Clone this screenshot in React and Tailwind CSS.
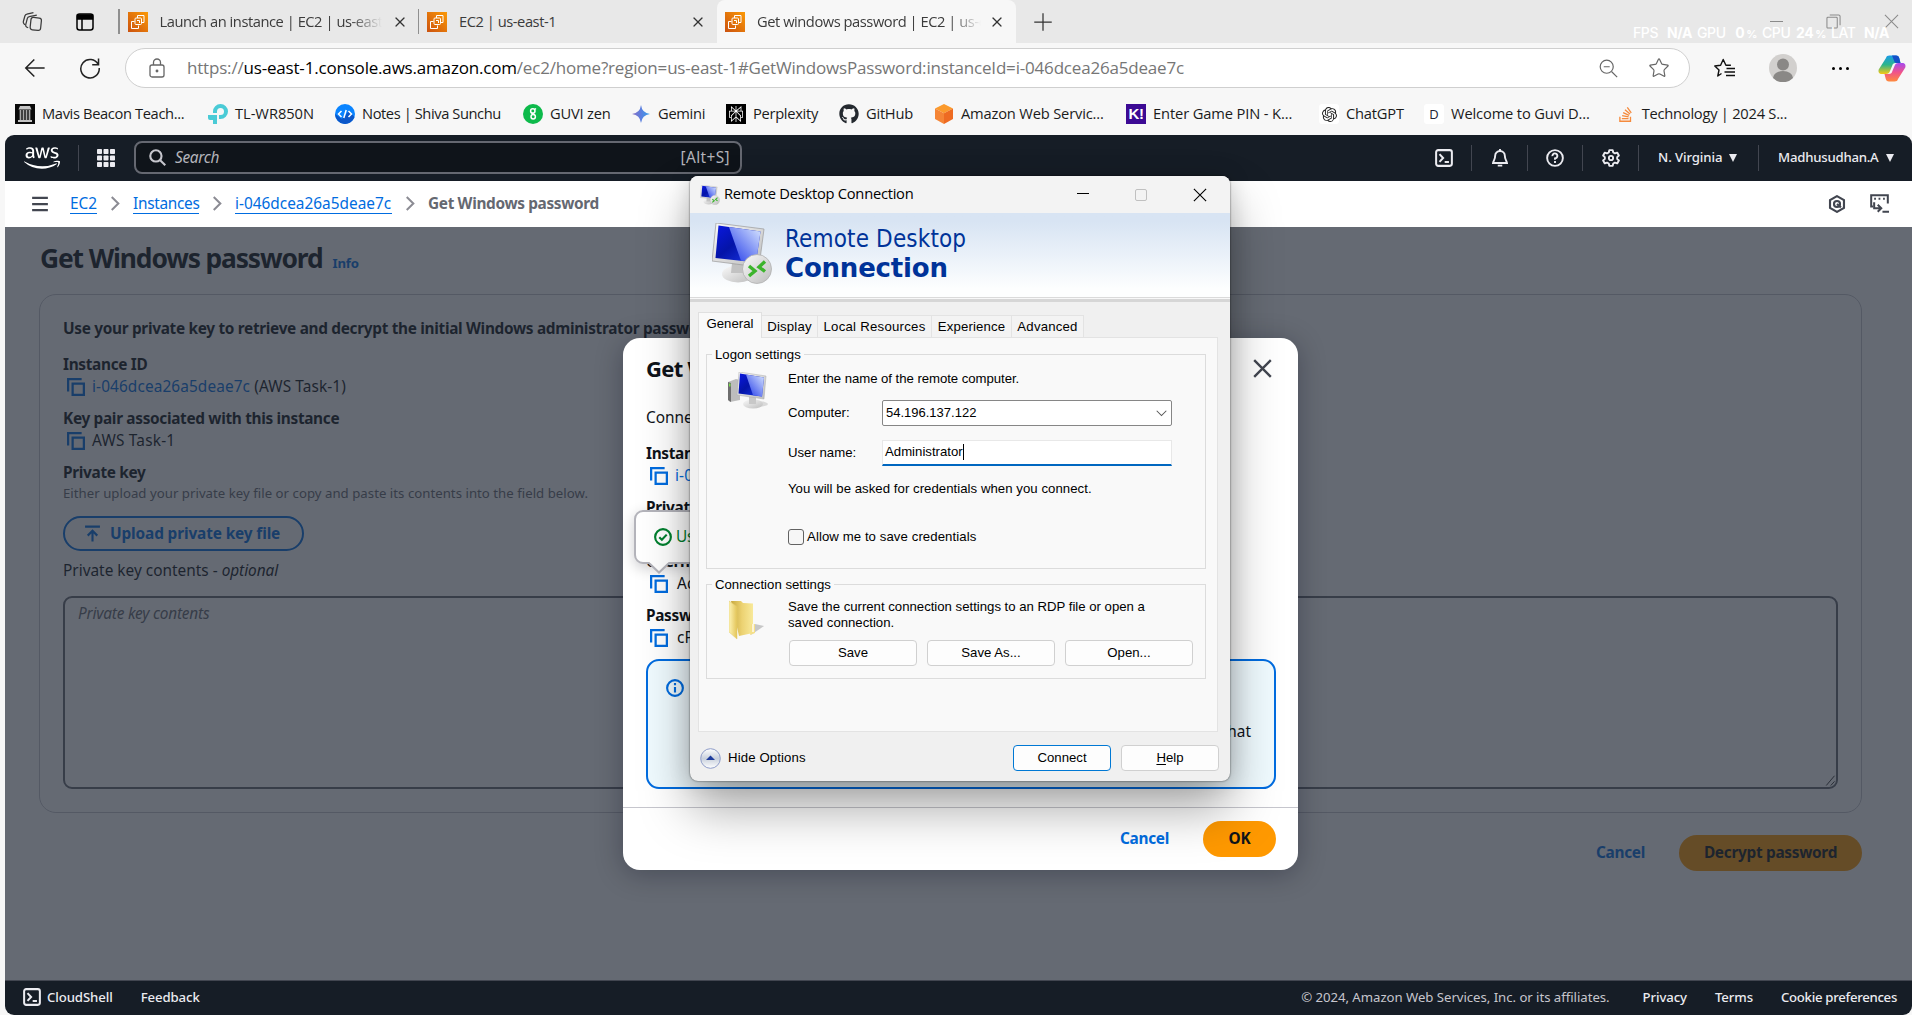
import React from 'react';
import { FaGithub, FaAws, FaStackOverflow } from 'react-icons/fa';
import { SiPerplexity, SiOpenai } from 'react-icons/si';
import { Star, X } from 'lucide-react';

/* ---------- shared glyphs ---------- */

const Glyph = ({ className = 'size-[18px]', w = 2, children }) => (
  <svg viewBox="0 0 16 16" fill="none" stroke="currentColor" strokeWidth={w} className={`shrink-0 ${className}`}>
    {children}
  </svg>
);

const CopyIcon = () => (
  <Glyph className="size-[18px] text-[#006ce0]">
    <path d="M15 5H5v10h10V5Z" />
    <path d="M13 1H1v11" />
  </Glyph>
);

const TerminalIcon = () => (
  <Glyph className="size-[18px]" w={1.8}>
    <rect x="1" y="1" width="14" height="14" rx="1.8" />
    <path d="m4 4.6 3.2 3.4L4 11.4M8.6 11.6h3.8" />
  </Glyph>
);

const Chevron = () => (
  <Glyph className="mr-[10px] ml-[11px] size-[15px] text-[#8c8c94]" w={2.2}>
    <path d="m4 1 7 7-7 7" />
  </Glyph>
);

const Ec2Icon = () => (
  <svg viewBox="0 0 20 20" className="size-5 shrink-0">
    <defs>
      <linearGradient id="ec2" x1="0" y1="1" x2="1" y2="0">
        <stop offset="0" stopColor="#cb5210" />
        <stop offset="1" stopColor="#fb9906" />
      </linearGradient>
    </defs>
    <rect width="20" height="20" fill="url(#ec2)" />
    <g fill="none" stroke="#fff" strokeWidth="1">
      <path d="M6.5 9.5H3.5v7h7v-3" />
      <rect x="7" y="6" width="6.5" height="6.5" rx="1" />
      <path d="M9.5 6V3.5h6.5v7h-2.5" />
      <path d="M9 8.5h2.5v2.5" />
    </g>
  </svg>
);

/* ---------- browser chrome ---------- */

const TabClose = ({ className = '' }) => <X className={`size-4 shrink-0 text-[#333] ${className}`} strokeWidth={1.8} />;

const tabTitle =
  '-mt-[2px] overflow-hidden whitespace-nowrap text-[14.7px] leading-5 tracking-[-0.46px] text-[#3b3b3b]';
const fade = '[mask-image:linear-gradient(to_right,#000_86%,transparent)]';

const Overlay = ({ name, value, unit, className }) => (
  <div className={`flex items-baseline justify-between ${className}`}>
    <span>{name}</span>
    <span className="font-bold">
      {value}
      {unit && <span className="ml-0.5 text-[11px]">{unit}</span>}
    </span>
  </div>
);

function TabStrip() {
  return (
    <div className="relative flex h-[43px] items-center bg-[#e8e8e8]">
      <svg viewBox="0 0 22 22" className="ml-[22px] size-[21px] text-[#3b3b3b]" fill="none" stroke="currentColor" strokeWidth="1.3">
        <rect x="9" y="7" width="11" height="13" rx="2.5" transform="rotate(6 14 13)" />
        <path d="M6.5 17.5 4.8 16.8a2.5 2.5 0 0 1-.9-2.6l1.7-6.4a2.5 2.5 0 0 1 2-1.8L15.5 4.3" />
        <path d="M3 14.5 1.8 13a2.5 2.5 0 0 1-.4-2l1.7-6a2.5 2.5 0 0 1 2-1.7L12 1.7" />
      </svg>
      <svg viewBox="0 0 18 18" className="ml-[33px] size-[18px]" fill="none" stroke="#000" strokeWidth="1.5">
        <rect x="1" y="1" width="16" height="16" rx="2.5" />
        <path d="M1.5 2h15v4h-15z" fill="#000" />
        <path d="M6 6v11" />
      </svg>
      <div className="ml-6 h-[25px] w-[1.5px] bg-[#8f8f8f]" />
      <div className="ml-2 flex w-[290px] items-center">
        <Ec2Icon />
        <div className={`ml-3 w-[222px] ${tabTitle} ${fade}`}>Launch an instance | EC2 | us-east</div>
        <TabClose className="ml-[10px]" />
      </div>
      <div className="h-[25px] w-[1.5px] bg-[#8f8f8f]" />
      <div className="ml-2 flex w-[290px] items-center">
        <Ec2Icon />
        <div className={`ml-3 w-[222px] ${tabTitle}`}>EC2 | us-east-1</div>
        <TabClose className="ml-[9px]" />
      </div>
      <div className="flex h-full w-[299px] items-center rounded-t-[8px] bg-[#f7f7f7] pl-2">
        <Ec2Icon />
        <div className={`ml-3 w-[224px] ${tabTitle} ${fade}`}>Get windows password | EC2 | us-e</div>
        <TabClose className="ml-2" />
      </div>
      <Glyph className="ml-[17px] size-[20px] text-[#333]" w={1}>
        <path d="M8 1v14M1 8h14" />
      </Glyph>
      <div className="ml-auto flex items-center pr-[13px] text-[#8a8a8a]">
        <div className="h-px w-[13px] bg-[#8a8a8a]" />
        <Glyph className="ml-[43px] size-[15px]" w={1.1}>
          <rect x="1" y="3.5" width="11" height="11.5" rx="1" />
          <path d="M4 1h9.5a1.5 1.5 0 0 1 1.5 1.5V12" />
        </Glyph>
        <Glyph className="ml-[43px] size-[15px]" w={1.1}>
          <path d="m1 1 14 14M15 1 1 15" />
        </Glyph>
      </div>
      <div className="absolute bottom-0 left-[1633px] flex h-5 w-[256px] justify-between font-['Inter'] text-[14px] leading-5 font-medium tracking-[-0.4px] text-white">
        <Overlay className="w-[59px]" name="FPS" value="N/A" />
        <Overlay className="w-[60px]" name="GPU" value="0" unit="%" />
        <Overlay className="w-[64px]" name="CPU" value="24" unit="%" />
        <Overlay className="w-[58px]" name="LAT" value="N/A" />
      </div>
    </div>
  );
}

function Toolbar() {
  return (
    <div className="flex h-[50px] items-center">
      <Glyph className="ml-6 size-[22px] text-[#222]" w={1.1}>
        <path d="M15 8H1.5M7.5 1.8 1.3 8l6.2 6.2" />
      </Glyph>
      <Glyph className="ml-[33px] size-[22px] text-[#222]" w={1.1}>
        <path d="M14 5.5A6.7 6.7 0 1 0 14.7 8M14.2 1v4.7H9.6" />
      </Glyph>
      <div className="ml-6 flex h-10 w-[1565px] items-center rounded-full border border-[#cfcfcf] bg-white">
        <svg viewBox="0 0 16 20" className="ml-[23px] h-5 w-4" fill="none" stroke="#666" strokeWidth="1.3">
          <rect x="1" y="7" width="14" height="12" rx="2" />
          <path d="M4.5 7V4.5a3.5 3.5 0 0 1 7 0V7" />
          <circle cx="8" cy="13" r=".8" fill="#666" />
        </svg>
        <div className="ml-[22px] w-[1412px] whitespace-nowrap text-[17px] leading-6 tracking-[-0.187px] text-[#767676]">
          https://<span className="text-black">us-east-1.console.aws.amazon.com</span>
          /ec2/home?region=us-east-1#GetWindowsPassword:instanceId=i-046dcea26a5deae7c
        </div>
        <Glyph className="size-[19px] text-[#666]" w={1}>
          <circle cx="6.5" cy="6.5" r="5.5" />
          <path d="m10.7 10.7 4.6 4.6M4 6.5h5" />
        </Glyph>
        <Star className="ml-[30px] size-[22px] text-[#666]" strokeWidth={1.3} />
      </div>
      <svg viewBox="0 0 22 20" className="ml-6 h-5 w-[22px]" fill="none" stroke="#111" strokeWidth="1.4">
        <path d="M7.5 15.5 3.8 18l1.2-6-4.2-4 5.8-.8L9.2 1.500l2.7 5.700h5" strokeLinejoin="round" />
        <path d="M12.5 10.5H21M10.5 14H21M12 17.5h9" />
      </svg>
      <svg viewBox="0 0 28 28" className="ml-[33px] size-7">
        <circle cx="14" cy="14" r="14" fill="#d2d0ce" />
        <circle cx="14" cy="10.5" r="6" fill="#8a8886" />
        <path d="M4 24a10 7 0 0 1 20 0 14 14 0 0 1-20 0Z" fill="#8a8886" />
      </svg>
      <div className="ml-[35px] flex gap-[4px]">
        <i className="size-[3px] rounded-full bg-black" />
        <i className="size-[3px] rounded-full bg-black" />
        <i className="size-[3px] rounded-full bg-black" />
      </div>
      <svg viewBox="0 0 28 27" className="ml-[29px] h-[27px] w-7">
        <defs>
          <linearGradient id="cpA" x1="0" y1="0" x2="0" y2="1">
            <stop offset="0" stopColor="#1a9bea" />
            <stop offset=".5" stopColor="#2bb58b" />
            <stop offset="1" stopColor="#f7c813" />
          </linearGradient>
          <linearGradient id="cpB" x1="0" y1="1" x2="0" y2="0">
            <stop offset="0" stopColor="#ff8a3c" />
            <stop offset=".5" stopColor="#f0538b" />
            <stop offset="1" stopColor="#a54af0" />
          </linearGradient>
        </defs>
        <path d="M8 3c.6-1.800 1.500-2.500 3.500-2.500h6.500c2 0 2.800 1 3.300 2.700L22.500 8h-5c-2 0-2.800 1-3.300 2.700L12 16c-.7 2-1.700 3-4 3H4c-3 0-4-2-3.300-4.600Z" fill="url(#cpA)" />
        <path d="M14 .5h4c2 0 2.800 1 3.300 2.700L22.500 8h-4c-1.500 0-2-1-2.400-2.300Z" fill="#1550c8" />
        <path d="M20 24c-.6 1.800-1.500 2.500-3.500 2.500H11c-2 0-2.800-1-3.300-2.700L6.500 19H11c2 0 2.800-1 3.300-2.700L16.500 11c.7-2 1.700-3 4-3H24c3 0 4 2 3.300 4.600Z" fill="url(#cpB)" />
      </svg>
    </div>
  );
}

const Pillar = () => (
  <svg viewBox="0 0 20 20" className="size-5">
    <rect width="20" height="20" fill="#0a0a0a" />
    <path d="M5 2h10l1.500 3.500h-13zM3 16h14v2H3z" fill="#c4c4c4" />
    <path d="M5.5 6v10M8.5 6v10M11.5 6v10M14.5 6v10" stroke="#a8a8a8" strokeWidth="1.7" />
  </svg>
);
const TpLink = () => (
  <svg viewBox="0 0 20 20" className="size-5" fill="#4acbd6">
    <path d="M12.5 0a7.5 7.5 0 0 1 0 15H11v-4h1.5A3.5 3.5 0 1 0 9 7.5V9H5V7.5A7.5 7.5 0 0 1 12.5 0Z" />
    <path d="M0 11h9v9H5v-4H2a2 2 0 0 1-2-2Z" />
  </svg>
);
const Notes = () => (
  <svg viewBox="0 0 20 20" className="size-5">
    <circle cx="10" cy="10" r="10" fill="#0a84ff" />
    <path d="M0 10a10 10 0 0 0 19.5 3L14 7 7 15Z" fill="#0b57c9" />
    <path d="M6.5 7 3.500 10l3 3M13.500 7l3 3-3 3M11.200 6 8.800 14" fill="none" stroke="#fff" strokeWidth="1.5" />
  </svg>
);
const Guvi = () => (
  <svg viewBox="0 0 20 20" className="size-5">
    <circle cx="10" cy="10" r="10" fill="#0dba4b" />
    <g fill="none" stroke="#fff" strokeWidth="1.5">
      <circle cx="9.800" cy="7" r="2.200" />
      <circle cx="10.200" cy="12.800" r="2.200" />
      <path d="M11.500 5.500 13 4.500M8.200 8.500l3.600 2.600" />
    </g>
  </svg>
);
const Gemini = () => (
  <svg viewBox="0 0 20 20" className="size-5">
    <defs>
      <linearGradient id="gem" x1="0" x2="1">
        <stop offset="0" stopColor="#8a6fc0" />
        <stop offset=".5" stopColor="#5a7fe0" />
        <stop offset="1" stopColor="#35a0e8" />
      </linearGradient>
    </defs>
    <path d="M10 1q1 8 9 9-8 1-9 9-1-8-9-9 8-1 9-9Z" fill="url(#gem)" />
  </svg>
);
const AwsCube = () => (
  <svg viewBox="0 0 20 20" className="size-5">
    <path d="m10 0 9 4.5-9 4.8L1 4.5Z" fill="#fb9a2c" />
    <path d="M1 4.5l9 4.8V20l-9-5Z" fill="#f58536" />
    <path d="m19 4.5-9 4.8V20l9-5Z" fill="#ee6b22" />
  </svg>
);

const bookmarks = [
  { t: 'Mavis Beacon Teach...', w: 'w-[193px]', k: 'tracking-[-0.37px]', i: <Pillar /> },
  { t: 'TL-WR850N', w: 'w-[127px]', k: 'tracking-[-0.04px]', i: <TpLink /> },
  { t: 'Notes | Shiva Sunchu', w: 'w-[188px]', k: 'tracking-[-0.42px]', i: <Notes /> },
  { t: 'GUVI zen', w: 'w-[108px]', k: 'tracking-[-0.2px]', i: <Guvi /> },
  { t: 'Gemini', w: 'w-[95px]', k: 'tracking-[-0.3px]', i: <Gemini /> },
  {
    t: 'Perplexity', w: 'w-[113px]', k: 'tracking-[-0.3px]',
    i: <span className="grid size-5 place-items-center bg-black text-white"><SiPerplexity className="size-4" /></span>,
  },
  { t: 'GitHub', w: 'w-[95px]', k: 'tracking-[-0.25px]', i: <FaGithub className="size-5 text-[#24292f]" /> },
  { t: 'Amazon Web Servic...', w: 'w-[192px]', k: 'tracking-[-0.18px]', i: <AwsCube /> },
  {
    t: 'Enter Game PIN - K...', w: 'w-[193px]', k: 'tracking-[-0.13px]',
    i: <span className="grid size-5 place-items-center bg-[#3c0a94] font-['Liberation_Sans'] text-[15px] leading-5 font-bold tracking-[-0.5px] text-white">K!</span>,
  },
  {
    t: 'ChatGPT', w: 'w-[105px]', k: 'tracking-[-0.2px]',
    i: <span className="grid size-5 place-items-center rounded-[3px] bg-white text-[#222]"><SiOpenai className="size-[15px]" /></span>,
  },
  {
    t: 'Welcome to Guvi D...', w: 'w-[193px]', k: 'tracking-[-0.15px]',
    i: <span className="grid size-5 place-items-center rounded-[3px] bg-white text-[13px] leading-5 text-[#223]">D</span>,
  },
  {
    t: 'Technology | 2024 S...', w: 'w-[170px]', k: 'tracking-[-0.25px]',
    i: <span className="grid size-[20px] place-items-center"><FaStackOverflow className="size-[17px] text-[#f58a3c]" /></span>,
  },
];

function Bookmarks() {
  return (
    <div className="flex h-[42px] items-center pl-[15px]">
      {bookmarks.map((b) => (
        <div key={b.t} className={`flex shrink-0 items-center gap-[7px] whitespace-nowrap text-[14.7px] leading-5 text-[#1b1b1b] ${b.w} ${b.k}`}>
          {b.i}
          <span className="-mt-[3px]">{b.t}</span>
        </div>
      ))}
    </div>
  );
}

/* ---------- AWS console ---------- */

const Sep = ({ className = '' }) => <div className={`h-[26px] w-px bg-[#424650] ${className}`} />;

function AwsNav() {
  return (
    <div className="flex h-[46px] shrink-0 items-center bg-[#161d26] pb-px text-[#ebebf0]">
      <FaAws className="ml-[19px] h-9 w-[36px] text-white" />
      <Sep className="ml-[18px]" />
      <svg viewBox="0 0 18 18" className="ml-[18px] size-[18px]" fill="currentColor">
        {[0, 6.5, 13].map((x) => [0, 6.5, 13].map((y) => <rect key={`${x}-${y}`} x={x} y={y} width="5" height="5" rx=".8" />))}
      </svg>
      <div className="ml-[19px] flex h-[33px] w-[608px] items-center rounded-[8px] border-2 border-[#656871] bg-[#0f141a] pr-[10px] text-[15.4px] leading-5 text-[#b4b4bb]">
        <Glyph className="ml-[13px] size-[17px] text-[#c6c6cd]">
          <circle cx="6.5" cy="6.5" r="5.3" />
          <path d="m10.3 10.3 5 5" />
        </Glyph>
        <span className="ml-[9px] italic tracking-[-0.3px]">Search</span>
        <span className="ml-auto tracking-[0.4px]">[Alt+S]</span>
      </div>
      <div className="ml-auto flex items-center text-[13.2px] font-medium leading-5">
        <TerminalIcon />
        <Sep className="ml-[18px]" />
        <Glyph className="ml-[19px] size-[18px]" w={1.7}>
          <path d="M8 1.8a4.3 4.3 0 0 0-4.3 4.3C3.7 9.5 2 10.500 1.800 12.500h12.400c-.2-2-1.900-3-1.900-6.400A4.300 4.300 0 0 0 8 1.800ZM8 0v2M6 14.800h4" />
        </Glyph>
        <Sep className="ml-[18px]" />
        <Glyph className="ml-[18px] size-[18px]" w={1.7}>
          <circle cx="8" cy="8" r="7" />
          <path d="M5.7 6.3A2.2 2.2 0 1 1 8 8.300v1.200M8 10.700v1.700" />
        </Glyph>
        <Sep className="ml-[18px]" />
        <Glyph className="ml-[19px] size-[18px]" w={1.7}>
          <path d="M6.5 1h3l.5 2.1 1.5.8 2-.7 1.5 2.6-1.500 1.400v1.600l1.500 1.400-1.500 2.600-2-.7-1.500.8-.5 2.100h-3L6 12.900l-1.500-.8-2 .7L1 10.200l1.500-1.400V7.200L1 5.800l1.500-2.600 2 .7L6 3.100Z" strokeLinejoin="round" />
          <circle cx="8" cy="8" r="1.9" />
        </Glyph>
        <Sep className="ml-[18px]" />
        <span className="-mt-[2px] ml-[19px] w-[64px] whitespace-nowrap tracking-[-0.1px]">N. Virginia</span>
        <span className="ml-[7px] h-0 w-0 border-x-[4.5px] border-t-[8px] border-x-transparent border-t-[#ebebf0]" />
        <Sep className="ml-[21px]" />
        <span className="-mt-[2px] ml-[19px] w-[100px] whitespace-nowrap tracking-[-0.23px]">Madhusudhan.A</span>
        <span className="mr-[18px] ml-[8px] h-0 w-0 border-x-[4.5px] border-t-[8px] border-x-transparent border-t-[#ebebf0]" />
      </div>
    </div>
  );
}

const Crumb = ({ className, children }) => (
  <span className={`whitespace-nowrap border-b border-[#006ce0] text-[#006ce0] ${className}`}>{children}</span>
);

function Breadcrumbs() {
  return (
    <div className="flex h-[46px] shrink-0 items-center bg-white pb-px text-[15.4px] leading-[19px]">
      <Glyph className="ml-[26px] size-[18px] text-[#424650]">
        <path d="M1 2.5h14M1 8h14M1 13.5h14" />
      </Glyph>
      <Crumb className="ml-[21px] w-[27px]">EC2</Crumb>
      <Chevron />
      <Crumb className="w-[66px] tracking-[-0.3px]">Instances</Crumb>
      <Chevron />
      <Crumb className="w-[157px]">i-046dcea26a5deae7c</Crumb>
      <Chevron />
      <span className="whitespace-nowrap font-bold tracking-[-0.35px] text-[#656871]">Get Windows password</span>
      <Glyph className="ml-auto size-[18px] text-[#424650]" w={1.9}>
        <path d="m8 1 6.200 3.500v7L8 15l-6.200-3.500v-7Z" />
        <circle cx="8" cy="8" r="2.700" w="1.500" />
        <path d="m8 8 3.500 3" />
      </Glyph>
      <Glyph className="mr-[23px] ml-[24px] size-[19px] text-[#424650]" w={1.7}>
        <path d="M2.5 10.5H1V1h14v7M3.5 4h1.5M7.2 4h1.500M11 4h1.500M3.500 7v5H9M6.500 9l3 3-3 3M10.500 15H16" />
      </Glyph>
    </div>
  );
}

const Value = ({ children }) => (
  <div className="flex h-[22px] items-center gap-[7px] pl-1 tracking-[0.1px]">{children}</div>
);
const Label = ({ className = '', children }) => (
  <div className={`h-[22px] whitespace-nowrap font-bold tracking-[-0.33px] ${className}`}>{children}</div>
);

function DimmedPage() {
  return (
    <div className="relative flex-1 bg-white text-[15.4px] leading-[22px] text-[#0f141a]">
      <div className="flex h-[51px] items-end pl-[35px]">
        <h1 className="text-[26.4px] leading-10 font-bold tracking-[-1.13px]">Get Windows password</h1>
        <span className="ml-[10px] pb-[6px] text-[13.2px] leading-[18px] font-bold tracking-[-0.2px] text-[#006ce0]">Info</span>
      </div>
      <div className="mt-[16px] ml-[34px] h-[519px] w-[1823px] rounded-[17px] border border-[#c6c6cd] pt-[23px] pl-[23px]">
        <div className="font-bold tracking-[-0.32px]">Use your private key to retrieve and decrypt the initial Windows administrator password</div>
        <Label className="mt-[14px]">Instance ID</Label>
        <Value>
          <CopyIcon />
          <span><span className="text-[#006ce0]">i-046dcea26a5deae7c</span> (AWS Task-1)</span>
        </Value>
        <Label className="mt-[10px]">Key pair associated with this instance</Label>
        <Value>
          <CopyIcon />
          <span className="tracking-[0.2px]">AWS Task-1</span>
        </Value>
        <Label className="mt-[10px]">Private key</Label>
        <div className="h-[18px] text-[13.2px] leading-[18px] tracking-[0.03px] text-[#656871]">
          Either upload your private key file or copy and paste its contents into the field below.
        </div>
        <div className="mt-[14px] flex h-[35px] w-[241px] items-center rounded-full border-2 border-[#006ce0] pl-[19px] font-bold tracking-[-0.13px] text-[#006ce0]">
          <Glyph className="size-[17px]">
            <path d="M1 1.5h14M8 15.5V6M3.5 10 8 5.500l4.500 4.500" />
          </Glyph>
          <span className="ml-[9px]">Upload private key file</span>
        </div>
        <div className="mt-[9px]">
          Private key contents - <i className="tracking-[-0.05px]">optional</i>
        </div>
        <div className="mt-[14px] flex h-[193px] w-[1775px] flex-col justify-between rounded-[9px] border-2 border-[#656871] bg-white">
          <span className="pt-[5px] pl-[13px] text-[#656871] italic tracking-[-0.2px]">Private key contents</span>
          <Glyph className="size-[12px] self-end text-[#333]" w={1.3}>
            <path d="M3 14 14 1M9 14l5-5.500" />
          </Glyph>
        </div>
      </div>
      <div className="mt-[22px] mr-[50px] flex h-9 items-center justify-end font-bold tracking-[-0.3px]">
        <span className="text-[#006ce0]">Cancel</span>
        <div className="ml-[34px] flex h-9 w-[183px] items-center justify-center rounded-full bg-[#ff9900]">Decrypt password</div>
      </div>
      <div className="absolute inset-0 bg-[#232b37]/70" />
    </div>
  );
}

function ConsoleFooter() {
  return (
    <div className="flex h-[35px] shrink-0 items-center border-t border-[#424650] bg-[#161d26] pb-[2px] text-[13.2px] leading-5 font-medium tracking-[-0.1px] text-[#ebebf0]">
      <span className="ml-[18px] flex items-center gap-[6px]"><TerminalIcon />CloudShell</span>
      <span className="ml-[28px]">Feedback</span>
      <span className="ml-auto font-normal tracking-[-0.04px] text-[#c6c6cd]">© 2024, Amazon Web Services, Inc. or its affiliates.</span>
      <span className="ml-[33px]">Privacy</span>
      <span className="ml-[28px]">Terms</span>
      <span className="mr-[15px] ml-[28px] tracking-[-0.3px]">Cookie preferences</span>
    </div>
  );
}

function PasswordModal() {
  return (
    <div className="absolute top-[338px] left-[623px] h-[532px] w-[675px] rounded-[17px] bg-white pt-[15px] text-[15.4px] leading-[22px] text-[#0f141a] shadow-[0_4px_28px_rgba(0,7,22,0.3)]">
      <div className="flex items-center justify-between pr-[26px] pl-[23px]">
        <h2 className="text-[22px] leading-[30px] font-bold tracking-[-0.7px]">Get Windows password</h2>
        <Glyph className="size-[19px] text-[#424650]">
          <path d="m1 1 14 14M15 1 1 15" />
        </Glyph>
      </div>
      <div className="pr-[22px] pl-[23px]">
        <div className="mt-[24px]">Connect</div>
        <Label className="mt-[14px]">Instance ID</Label>
        <Value><CopyIcon /><span className="text-[#006ce0]">i-046</span></Value>
        <Label className="mt-[10px]">Private IP</Label>
        <Value><CopyIcon /></Value>
        <Label className="mt-[10px]">Username</Label>
        <Value><CopyIcon /><span className="pl-[2px]">Admin</span></Value>
        <Label className="mt-[10px]">Password</Label>
        <Value><CopyIcon /><span className="pl-[2px]">cP</span></Value>
        <div className="mt-[10px] flex h-[130px] items-start justify-between rounded-[13px] border-2 border-[#006ce0] bg-[#f0fbff] pr-[23px] pl-[18px]">
          <Glyph className="mt-[18px] size-[18px] text-[#006ce0]" w={1.9}>
            <circle cx="8" cy="8" r="7" />
            <path d="M8 12V7M8 5.500v-2" />
          </Glyph>
          <span className="mt-[60px]">that</span>
        </div>
      </div>
      <div className="mt-[18px] flex h-[62px] items-center justify-end border-t border-[#c6c6cd] pr-[22px] font-bold tracking-[-0.3px]">
        <span className="text-[#006ce0]">Cancel</span>
        <div className="ml-[34px] flex h-9 w-[73px] items-center justify-center rounded-full bg-[#ff9900]">OK</div>
      </div>
      <div className="absolute top-[172px] left-[11px] flex h-[54px] w-[200px] items-center gap-[4px] rounded-[9px] border-2 border-[#b4b4bb] bg-white pl-[18px] tracking-[-0.3px] text-[#00802f] shadow-[0_4px_14px_rgba(0,7,22,0.2)]">
        <Glyph className="size-[18px]" w={1.9}>
          <circle cx="8" cy="8" r="7" />
          <path d="m4.7 8.2 2.300 2.300 4.300-4.600" />
        </Glyph>
        <span>User</span>
        <svg viewBox="0 0 22 12" className="absolute top-[50px] left-[12px] h-3 w-[22px]">
          <path d="M0 0 11 10.500 22 0" fill="#fff" stroke="#b4b4bb" strokeWidth="2" />
          <path d="M1.500 0h19l-1 1h-17Z" fill="#fff" />
        </svg>
      </div>
    </div>
  );
}

/* ---------- Remote Desktop dialog ---------- */

const Gradients = () => (
  <defs>
    <linearGradient id="scr" x1="0" y1="0" x2="1" y2="1">
      <stop offset="0" stopColor="#0a18e0" />
      <stop offset=".45" stopColor="#0414a8" />
      <stop offset="1" stopColor="#1c3cf0" />
    </linearGradient>
    <linearGradient id="shine" x1="0" y1="1" x2="1" y2="0">
      <stop offset="0" stopColor="#1c34e8" />
      <stop offset="1" stopColor="#d8e6ff" />
    </linearGradient>
    <linearGradient id="metal" x1="0" y1="0" x2="1" y2="1">
      <stop offset="0" stopColor="#fafafa" />
      <stop offset="1" stopColor="#bcbcbc" />
    </linearGradient>
  </defs>
);

const MonitorLogo = ({ className }) => (
  <svg viewBox="0 0 60 61" className={`shrink-0 ${className}`}>
    <Gradients />
    <ellipse cx="26" cy="51" rx="16" ry="8.5" fill="url(#metal)" />
    <path d="M20 40h13l1 10H19Z" fill="#c2c2c2" />
    <path d="m4 0 48 6-5 38L0 38Z" fill="url(#metal)" stroke="#9a9a9a" strokeWidth=".7" />
    <path d="m6.500 2.500 42 6-4.500 31L3.500 35Z" fill="url(#scr)" />
    <path d="m17 4 31.500 4.500-4.500 31-15-1.700Z" fill="url(#shine)" />
    <circle cx="45" cy="46" r="14.500" fill="url(#metal)" stroke="#b0b0b0" strokeWidth=".8" />
    <path d="m37 43 6 5-6 5M53 38.500l-6 5.500 6 4.500" fill="none" stroke="#3cb42c" strokeWidth="3.400" />
  </svg>
);

const ComputerPic = () => (
  <svg viewBox="0 0 40 37" className="absolute top-[17px] left-[21px] h-[37px] w-10">
    <ellipse cx="29" cy="32" rx="11" ry="3" fill="#000" opacity=".12" />
    <path d="M0 10 8 7l4 1v20L2 30 0 28Z" fill="#bdbdbd" />
    <path d="m0 10 3 1v19l-3-2Z" fill="#6e6e6e" />
    <path d="M1 11.500h1.500v3H1z" fill="#7be04a" />
    <ellipse cx="25" cy="32" rx="10" ry="4.500" fill="url(#metal)" />
    <path d="M21 24h7v8h-7Z" fill="#c8c8c8" />
    <path d="m11 0 27 4-2 23L9 23Z" fill="url(#metal)" stroke="#aaa" strokeWidth=".5" />
    <path d="m12 1.500 24 4-2 19L10.500 21.500Z" fill="url(#scr)" />
    <path d="m18 2.500 18 3-2 19-9-1.200Z" fill="url(#shine)" />
  </svg>
);

const FolderPic = () => (
  <svg viewBox="0 0 36 40" className="absolute top-[15px] left-[22px] h-10 w-9">
    <defs>
      <linearGradient id="fold" x1="0" x2="1">
        <stop offset="0" stopColor="#fdf3b4" />
        <stop offset="1" stopColor="#e3c457" />
      </linearGradient>
      <linearGradient id="foldBack" x1="0" x2="1">
        <stop offset="0" stopColor="#c9a93e" />
        <stop offset=".5" stopColor="#ecd272" />
        <stop offset="1" stopColor="#f8e99a" />
      </linearGradient>
    </defs>
    <path d="m22 35 13-9-9-2Z" fill="#000" opacity=".2" />
    <path d="M2 1h10l2 2 10 .5V33l-14 3Z" fill="url(#foldBack)" />
    <path d="M22 24h4v9l-5 2Z" fill="#f5e08a" />
    <path d="M24 24v8" stroke="#fff" strokeWidth="1.300" />
    <path d="M0 1 8 6.500V39L0 32Z" fill="url(#fold)" stroke="#e0c868" strokeWidth=".5" />
  </svg>
);

const btn = 'flex h-[26px] items-center justify-center rounded-[4px] border bg-[#fdfdfd]';
const Legend = ({ children }) => (
  <span className="absolute -top-[9px] left-[5px] bg-[#f9f9f9] px-[3px] leading-[17px]">{children}</span>
);
const InactiveTab = ({ className, children }) => (
  <div className={`flex h-[22px] items-center justify-center border-t border-r border-[#e3e3e3] bg-[#f3f3f3] pt-px whitespace-nowrap ${className}`}>
    {children}
  </div>
);

function RdpWindow() {
  return (
    <div className="absolute top-[176px] left-[690px] flex h-[605px] w-[540px] flex-col overflow-hidden rounded-[8px] bg-[#f0f0f0] font-['Liberation_Sans',sans-serif] text-[13.2px] leading-4 text-black shadow-[0_0_2px_rgba(0,0,0,0.7),0_0_22px_rgba(0,0,0,0.16),0_28px_50px_rgba(0,0,0,0.34)]">
      <div className="flex h-[37px] shrink-0 items-center bg-[#f3f3f3] pl-[10px] font-['Open_Sans',sans-serif] text-[14.7px] tracking-[-0.25px]">
        <MonitorLogo className="size-5" />
        <span className="-mt-[3px] ml-1">Remote Desktop Connection</span>
        <div className="mt-[-2px] ml-auto h-px w-3 bg-black" />
        <div className="ml-[46px] size-3 rounded-[2px] border border-[#c0c0c0]" />
        <Glyph className="mr-[23px] ml-[46px] size-[14px]" w={1.3}>
          <path d="m1 1 14 14M15 1 1 15" />
        </Glyph>
      </div>
      <div className="flex h-[85px] shrink-0 items-start border-b border-[#dadada] bg-linear-to-b from-[#d8e4f3] from-10% via-[#eaf1f9] via-50% to-[#fdfefe] to-90% pl-[22px]">
        <MonitorLogo className="mt-[10px] h-[61px] w-[60px]" />
        <div className="mt-[12px] ml-[13px] text-[#003399]">
          <div className="font-['DejaVu_Sans_Condensed','DejaVu_Sans',sans-serif] text-[24px] leading-[29px] tracking-[0.15px]">Remote Desktop</div>
          <div className="font-['DejaVu_Sans',sans-serif] text-[26px] leading-[29px] font-bold tracking-[-0.2px]">Connection</div>
        </div>
      </div>
      <div className="h-[4px] shrink-0 border-b-[3px] border-[#d6d6d6] bg-[#f8f8f8]" />
      <div className="relative z-10 mt-[10px] ml-[8px] flex h-[25px] shrink-0 items-end">
        <div className="flex h-[26px] w-[64px] translate-y-px items-center justify-center border-x border-t border-[#e0e0e0] bg-[#f9f9f9] pb-[3px]">General</div>
        <InactiveTab className="w-[56px] tracking-[0.15px]">Display</InactiveTab>
        <InactiveTab className="w-[114px] tracking-[0.25px]">Local Resources</InactiveTab>
        <InactiveTab className="w-[80px] tracking-[0.15px]">Experience</InactiveTab>
        <InactiveTab className="w-[72px] tracking-[0.2px]">Advanced</InactiveTab>
      </div>
      <div className="ml-[8px] h-[395px] w-[520px] shrink-0 border border-[#e3e3e3] bg-[#f9f9f9] pt-[16px] pl-[7px]">
        <div className="relative h-[215px] w-[500px] border border-[#dcdcdc] pt-[16px] pl-[81px]">
          <Legend>Logon settings</Legend>
          <ComputerPic />
          <div className="tracking-[-0.05px]">Enter the name of the remote computer.</div>
          <div className="mt-[13px] flex items-center">
            <span className="w-[94px]">Computer:</span>
            <div className="flex h-[26px] w-[290px] items-center justify-between rounded-[2px] border border-[#868686] bg-white pr-[4px] pl-[3px] text-[13px]">
              54.196.137.122
              <Glyph className="size-[11px] text-[#555]" w={1.5}>
                <path d="m1 4 7 7 7-7" />
              </Glyph>
            </div>
          </div>
          <div className="mt-[14px] flex items-center">
            <span className="w-[94px]">User name:</span>
            <div className="flex h-[26px] w-[290px] items-center border border-b-2 border-[#e8e8e8] border-b-[#0067c0] bg-white pb-px pl-[2px]">
              Administrator
              <i className="h-4 w-px bg-black" />
            </div>
          </div>
          <div className="mt-[15px] tracking-[0.04px]">You will be asked for credentials when you connect.</div>
          <div className="mt-[32px] flex items-center gap-[3px]">
            <span className="size-4 rounded-[3px] border border-[#626262] bg-[#f6f6f6]" />
            <span className="tracking-[0.08px]">Allow me to save credentials</span>
          </div>
        </div>
        <div className="relative mt-[15px] h-[95px] w-[500px] border border-[#dcdcdc] pt-[14px] pl-[81px]">
          <Legend>Connection settings</Legend>
          <FolderPic />
          <div className="w-[380px] tracking-[-0.01px]">
            Save the current connection settings to an RDP file or open a
            <br />
            saved connection.
          </div>
          <div className="mt-[9px] flex gap-[10px] pl-px">
            <div className={`${btn} w-[128px] border-[#d0d0d0]`}>Save</div>
            <div className={`${btn} w-[128px] border-[#d0d0d0]`}>Save As...</div>
            <div className={`${btn} w-[128px] border-[#d0d0d0]`}>Open...</div>
          </div>
        </div>
      </div>
      <div className="mt-[13px] flex items-center pr-[11px] pl-[10px]">
        <svg viewBox="0 0 21 21" className="size-[21px]">
          <defs>
            <linearGradient id="knob" x1="0" y1="0" x2="0" y2="1">
              <stop offset="0" stopColor="#fff" />
              <stop offset=".5" stopColor="#c8d0dc" />
              <stop offset="1" stopColor="#fff" />
            </linearGradient>
          </defs>
          <circle cx="10.5" cy="10.5" r="9.8" fill="url(#knob)" stroke="#8e9cc8" />
          <path d="m10.5 7.5 4.5 4.5H6Z" fill="#1e3c9c" />
        </svg>
        <span className="ml-[7px] tracking-[0.12px]">Hide Options</span>
        <div className={`${btn} ml-auto w-[98px] border-[#0078d4]`}>Connect</div>
        <div className={`${btn} ml-[10px] w-[98px] border-[#d0d0d0]`}><span className="underline underline-offset-2">H</span>elp</div>
      </div>
    </div>
  );
}

export default function App() {
  return (
    <div className="relative flex h-[1015px] w-[1912px] flex-col overflow-hidden bg-[#f7f7f7] font-['Open_Sans',sans-serif]">
      <TabStrip />
      <Toolbar />
      <Bookmarks />
      <div className="ml-[5px] flex flex-1 flex-col overflow-hidden rounded-[9px] font-['Noto_Sans',sans-serif]">
        <AwsNav />
        <Breadcrumbs />
        <DimmedPage />
        <ConsoleFooter />
      </div>
      <div className="font-['Noto_Sans',sans-serif]"><PasswordModal /></div>
      <RdpWindow />
    </div>
  );
}
